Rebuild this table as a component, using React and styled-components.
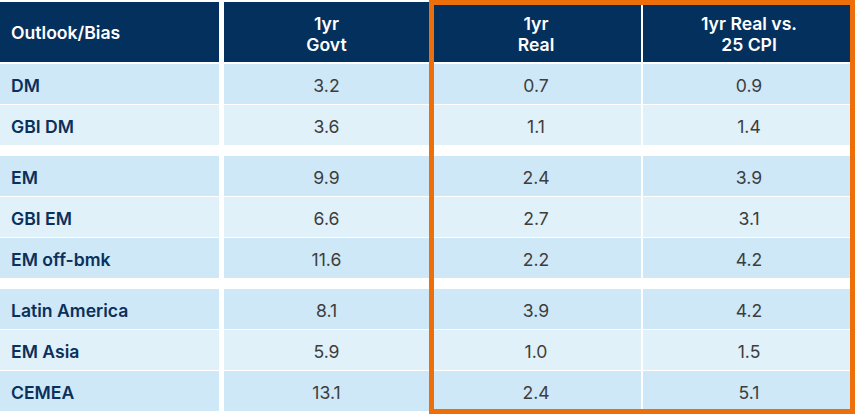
import React from 'react';
import styled, { createGlobalStyle } from 'styled-components';

const GlobalStyle = createGlobalStyle`
  html, body {
    margin: 0;
    padding: 0;
    background: #ffffff;
  }
  body {
    font-family: Inter, "Noto Sans", "Liberation Sans", sans-serif;
    width: 855px;
    height: 414px;
    overflow: hidden;
  }
`;

const StyledWrap = styled.div`
  position: relative;
  width: 855px;
  height: 414px;
  padding-top: 2px;
  box-sizing: border-box;
`;

const StyledTable = styled.div`
  display: grid;
  grid-template-columns: 222px 205px 210px 1fr;
  column-gap: 2px;
`;

const StyledHead = styled.div`
  height: 60px;
  margin-bottom: 2px;
  margin-right: ${(props) => (props.first ? '3px' : '0')};
  background-color: #04305d;
  color: #ffffff;
  font-size: 17.6px;
  font-weight: 600;
  line-height: 21px;
  display: flex;
  align-items: center;
  justify-content: ${(props) => (props.first ? 'flex-start' : 'center')};
  text-align: ${(props) => (props.first ? 'left' : 'center')};
  padding: ${(props) => (props.first ? '0 0 0 11px' : '3px 0 0 0')};
  box-sizing: border-box;
`;

const StyledCell = styled.div`
  height: 40px;
  margin-right: ${(props) => (props.first ? '3px' : '0')};
  margin-bottom: ${(props) => (props.gap ? '11px' : '1px')};
  background-color: ${(props) => (props.light ? '#e1f1fa' : '#cfe8f7')};
  display: flex;
  align-items: center;
  justify-content: ${(props) => (props.first ? 'flex-start' : 'center')};
  padding: ${(props) => (props.first ? '3px 0 0 11px' : '3px 0 0 0')};
  box-sizing: border-box;
  font-size: 17.6px;
  font-weight: ${(props) => (props.first ? 600 : 400)};
  color: ${(props) => (props.first ? '#0b305b' : '#3d3d3d')};
`;

const StyledHighlight = styled.div`
  position: absolute;
  left: 429px;
  top: 0;
  width: 426px;
  height: 414px;
  border: 5px solid #ec6f0b;
  box-sizing: border-box;
  pointer-events: none;
`;

const headers = ['Outlook/Bias', ['1yr', 'Govt'], ['1yr', 'Real'], ['1yr Real vs.', '25 CPI']];

const rows = [
  { name: 'DM', values: ['3.2', '0.7', '0.9'] },
  { name: 'GBI DM', values: ['3.6', '1.1', '1.4'], light: true, gap: true },
  { name: 'EM', values: ['9.9', '2.4', '3.9'] },
  { name: 'GBI EM', values: ['6.6', '2.7', '3.1'], light: true },
  { name: 'EM off-bmk', values: ['11.6', '2.2', '4.2'], gap: true },
  { name: 'Latin America', values: ['8.1', '3.9', '4.2'] },
  { name: 'EM Asia', values: ['5.9', '1.0', '1.5'], light: true },
  { name: 'CEMEA', values: ['13.1', '2.4', '5.1'] },
];

export default function App() {
  return (
    <StyledWrap>
      <GlobalStyle />
      <StyledTable>
        {headers.map((h, i) => (
          <StyledHead key={i} first={i === 0}>
            {Array.isArray(h) ? (
              <div>
                {h[0]}
                <br />
                {h[1]}
              </div>
            ) : (
              h
            )}
          </StyledHead>
        ))}
        {rows.map((row) => (
          <React.Fragment key={row.name}>
            <StyledCell first light={row.light} gap={row.gap}>
              {row.name}
            </StyledCell>
            {row.values.map((v, j) => (
              <StyledCell key={j} light={row.light} gap={row.gap}>
                {v}
              </StyledCell>
            ))}
          </React.Fragment>
        ))}
      </StyledTable>
      <StyledHighlight />
    </StyledWrap>
  );
}
